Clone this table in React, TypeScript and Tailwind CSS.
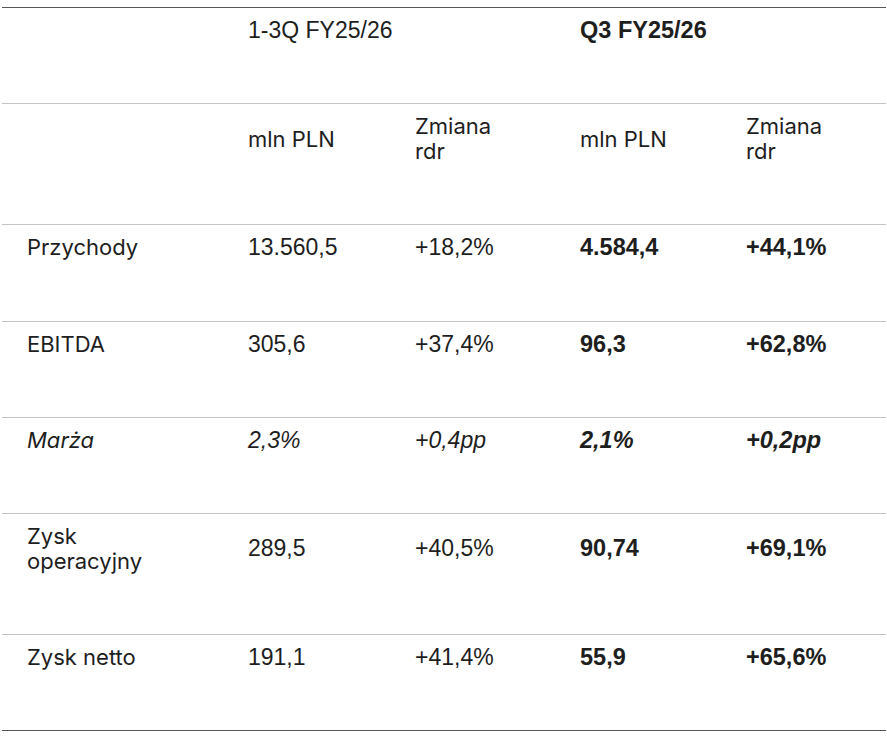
import React from "react";

const word = "font-['Inter','Open_Sans',sans-serif] text-[22px]";
const num = "font-['Liberation_Sans','Arial',sans-serif] text-[23px]";
const numB = "font-['Liberation_Sans','Arial',sans-serif] text-[23.5px] font-bold";

const cell = "pl-[25px] pr-2 pt-[10px] pb-[60.2px] align-middle leading-[25px] text-[#1e1e1e]";

type Row = {
  label: React.ReactNode;
  v: [string, string, string, string];
  italic?: boolean;
};

const rows: Row[] = [
  { label: "Przychody", v: ["13.560,5", "+18,2%", "4.584,4", "+44,1%"] },
  { label: "EBITDA", v: ["305,6", "+37,4%", "96,3", "+62,8%"] },
  { label: "Marża", v: ["2,3%", "+0,4pp", "2,1%", "+0,2pp"], italic: true },
  {
    label: (
      <>
        Zysk
        <br />
        operacyjny
      </>
    ),
    v: ["289,5", "+40,5%", "90,74", "+69,1%"],
  },
  { label: "Zysk netto", v: ["191,1", "+41,4%", "55,9", "+65,6%"] },
];

export default function App() {
  return (
    <div className="w-[887px] h-[738px] bg-white pt-[7px] pl-[2px]">
      <table className="w-[884px] table-fixed border-collapse border-t border-b border-t-[#555] border-b-[#555]">
        <colgroup>
          <col className="w-[221px]" />
          <col className="w-[167px]" />
          <col className="w-[165px]" />
          <col className="w-[166px]" />
          <col className="w-[165px]" />
        </colgroup>
        <tbody>
          <tr className="border-b border-[#c4c4c4]">
            <td className={cell}></td>
            <td className={`${cell} ${num}`} colSpan={2}>
              1-3Q FY25/26
            </td>
            <td className={`${cell} ${numB}`} colSpan={2}>
              Q3 FY25/26
            </td>
          </tr>
          <tr className="border-b border-[#c4c4c4]">
            <td className={cell}></td>
            <td className={`${cell} ${word}`}>mln PLN</td>
            <td className={`${cell} ${word}`}>
              Zmiana
              <br />
              rdr
            </td>
            <td className={`${cell} ${word}`}>mln PLN</td>
            <td className={`${cell} ${word}`}>
              Zmiana
              <br />
              rdr
            </td>
          </tr>
          {rows.map((r, i) => (
            <tr
              key={i}
              className={i < rows.length - 1 ? "border-b border-[#c4c4c4]" : ""}
            >
              <td className={`${cell} ${word} ${r.italic ? "italic" : ""}`}>
                {r.label}
              </td>
              <td className={`${cell} ${num} ${r.italic ? "italic" : ""}`}>
                {r.v[0]}
              </td>
              <td className={`${cell} ${num} ${r.italic ? "italic" : ""}`}>
                {r.v[1]}
              </td>
              <td className={`${cell} ${numB} ${r.italic ? "italic" : ""}`}>
                {r.v[2]}
              </td>
              <td className={`${cell} ${numB} ${r.italic ? "italic" : ""}`}>
                {r.v[3]}
              </td>
            </tr>
          ))}
        </tbody>
      </table>
    </div>
  );
}
